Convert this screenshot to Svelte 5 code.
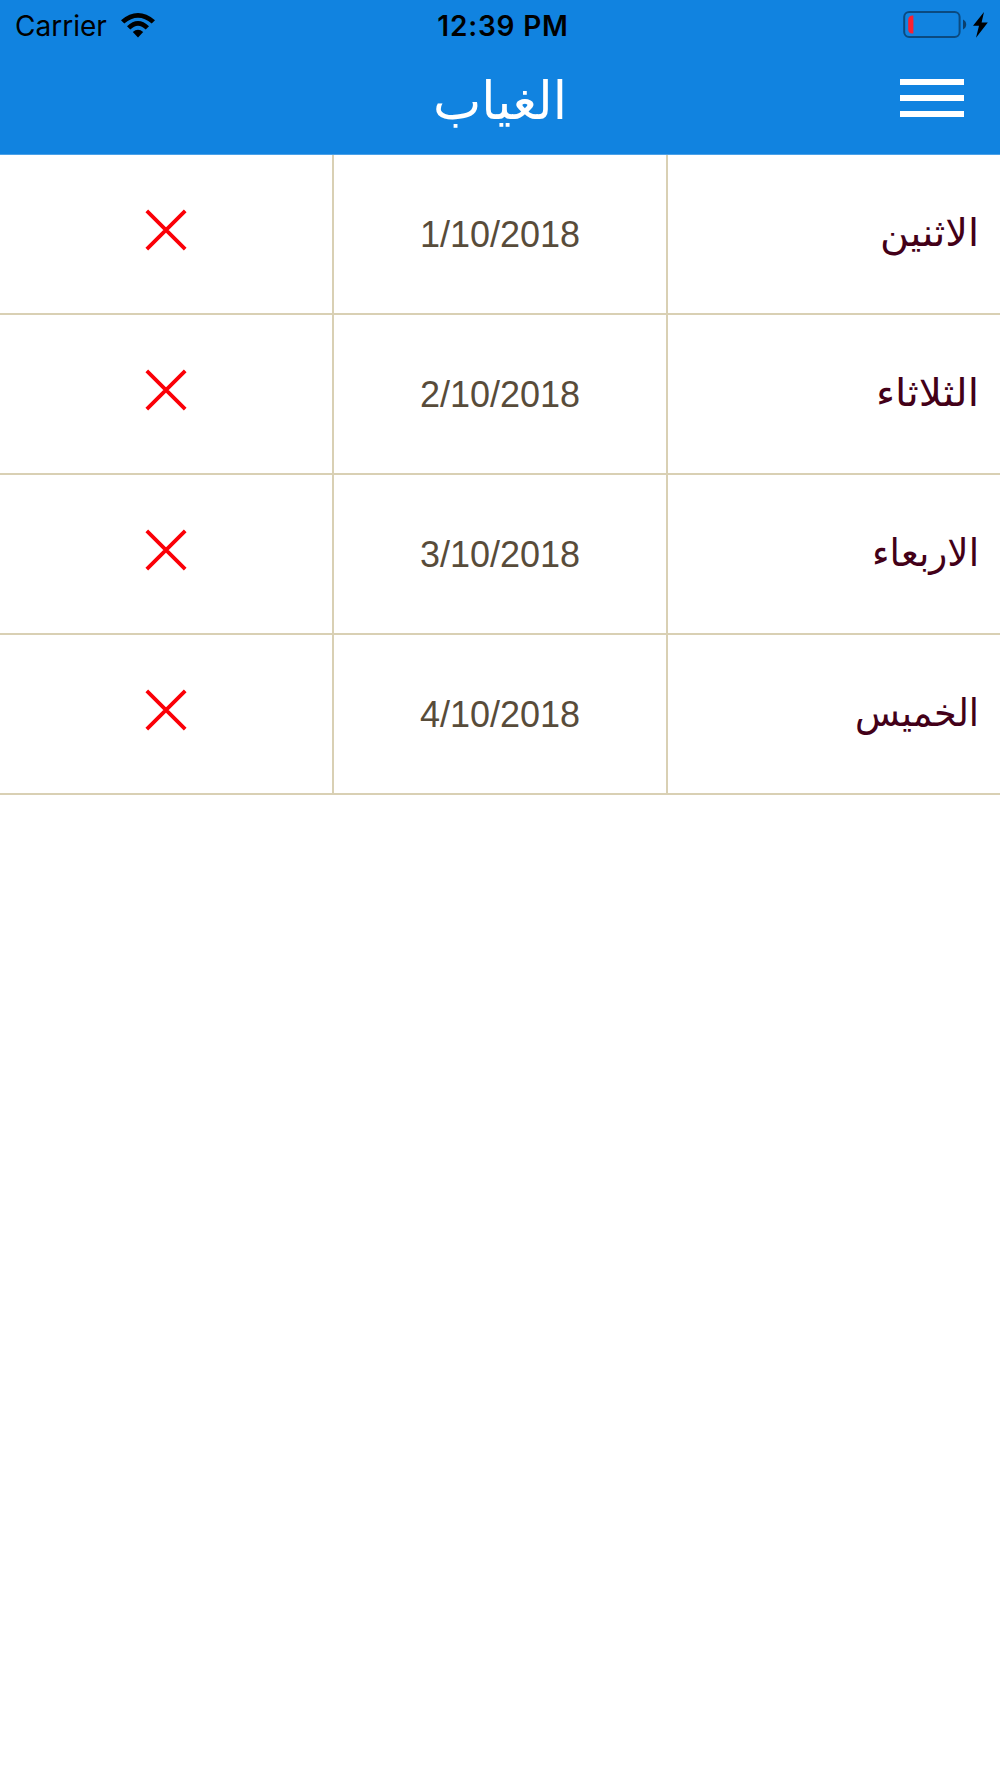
<script lang="ts">
  type Day = { name: string; width: number; date: string }

  const title = 'الغياب'
  const days: Day[] = [
    { name: 'الاثنين', width: 99, date: '1/10/2018' },
    { name: 'الثلاثاء', width: 103, date: '2/10/2018' },
    { name: 'الاربعاء', width: 107, date: '3/10/2018' },
    { name: 'الخميس', width: 124, date: '4/10/2018' },
  ]
</script>

<div class="screen">
  <header>
    <div class="status">
      <div class="carrier">
        <span>Carrier</span>
        <svg class="wifi" viewBox="0 0 34 25" aria-hidden="true">
          <path d="M0 7.2 Q17 -7.2 34 7.2 L30.7 10.6 Q17 -1.2 3.3 10.6 Z" />
          <path d="M6 13.2 Q17 2.8 28 13.2 L24.7 16.5 Q17 8.8 9.3 16.5 Z" />
          <path d="M11.8 19.1 Q17 14.6 22.2 19.1 L17 24.4 Z" />
        </svg>
      </div>
      <span class="time">12:39 PM</span>
      <svg class="battery" viewBox="0 0 86 28" aria-hidden="true">
        <rect x="1.2" y="1" width="55.4" height="25" rx="5" fill="none" stroke="#0b4a80" stroke-width="2" />
        <path d="M10.4 4.6 V22.6 H9 Q5.2 22 5.2 18.2 V9 Q5.2 5.2 9 4.6 Z" fill="#fb2030" />
        <path d="M60 8.5 Q63.2 10.2 63.2 13.5 Q63.2 16.8 60 18.5 Z" fill="#0b3f6c" />
        <path d="M81 1 L70 14.8 H76 L73 26.8 L84.8 11.6 H78.6 Z" />
      </svg>
    </div>
    <div class="bar">
      <h1>
        <svg class="arabic" width="134" height="70" role="img" aria-label={title}>
          <text x="134" y="52" direction="rtl" textLength="134" lengthAdjust="spacingAndGlyphs">{title}</text>
        </svg>
      </h1>
      <button class="menu" aria-label="القائمة">
        <i></i>
        <i></i>
        <i></i>
      </button>
    </div>
  </header>

  <div class="table">
    {#each days as day (day.date)}
      <div class="row">
        <div class="cell">
          <svg class="cross" viewBox="0 0 40 40" aria-hidden="true">
            <path d="M0.8 0.8 L39.2 39.2 M39.2 0.8 L0.8 39.2" />
          </svg>
        </div>
        <div class="cell date">{day.date}</div>
        <div class="cell day">
          <svg class="arabic" width={day.width} height="60" role="img" aria-label={day.name}>
            <text x={day.width} y="42" direction="rtl" textLength={day.width} lengthAdjust="spacingAndGlyphs">{day.name}</text>
          </svg>
        </div>
      </div>
    {/each}
  </div>
</div>

<style>
  :global(body) {
    background: #fff;
  }
  .screen {
    width: 1000px;
    height: 1778px;
    overflow: hidden;
    background: #fff;
    font-family: 'Liberation Sans', Arial, sans-serif;
  }
  header {
    height: 155px;
    background: #1183e0;
    border-bottom: 1px solid #4ba1e8;
    box-sizing: border-box;
  }
  .status {
    display: grid;
    grid-template-columns: 1fr auto 1fr;
    align-items: center;
    height: 50px;
    padding: 0 11px 0 15px;
    box-sizing: border-box;
    color: #000;
    font-family: Inter, sans-serif;
    font-size: 28px;
  }
  .carrier {
    display: flex;
    align-items: center;
    gap: 14px;
    padding-top: 1px;
  }
  .wifi {
    width: 34px;
    height: 25px;
    margin-bottom: 1px;
  }
  .time {
    padding: 1px 0 0 2px;
    font-weight: 600;
    letter-spacing: 0.8px;
  }
  .battery {
    width: 86px;
    height: 28px;
    justify-self: end;
  }
  .bar {
    display: grid;
    grid-template-columns: 1fr auto 1fr;
    height: 104px;
    padding: 0 36px;
  }
  h1 {
    grid-column: 2;
    margin: 0;
    padding-top: 17px;
  }
  .arabic {
    display: block;
    overflow: visible;
    font-family: 'DejaVu Sans', sans-serif;
    font-weight: 400;
  }
  h1 .arabic {
    fill: #fff;
    font-size: 52px;
  }
  .menu {
    justify-self: end;
    display: flex;
    flex-direction: column;
    gap: 10.4px;
    width: 64px;
    margin: 29px 0 0;
    padding: 0;
    border: 0;
    background: none;
  }
  .menu i {
    height: 5.6px;
    background: #fff;
  }
  .row {
    display: grid;
    grid-template-columns: 334px 334px 332px;
    height: 160px;
    border-bottom: 2px solid #d9d0b4;
    box-sizing: border-box;
  }
  .cell {
    display: flex;
    align-items: center;
    justify-content: center;
    border-right: 2px solid #d9d0b4;
    box-sizing: border-box;
  }
  .cross {
    width: 40px;
    height: 40px;
    margin-bottom: 9px;
    fill: none;
    stroke: #fb0007;
    stroke-width: 3.8;
    overflow: visible;
  }
  .date {
    padding-top: 2px;
    color: #584c3a;
    font-size: 36px;
  }
  .day {
    justify-content: flex-end;
    padding-right: 21px;
    border-right: 0;
  }
  .day .arabic {
    fill: #430018;
    font-size: 38px;
  }
</style>
